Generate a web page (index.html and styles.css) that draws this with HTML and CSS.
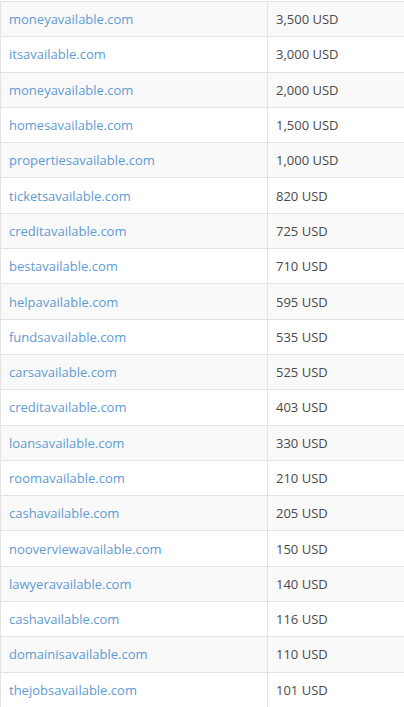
FILE: index.html
```html
<!DOCTYPE html>
<html lang="en">
<head>
    <meta charset="UTF-8">
    <meta name="viewport" content="width=device-width, initial-scale=1.0">
    <title>Available Domains</title>
    <link rel="stylesheet" href="styles.css">
</head>
<body>
    <table class="domains">
        <tbody>
            <tr><td><a href="#">moneyavailable.com</a></td><td>3,500 USD</td></tr>
            <tr><td><a href="#">itsavailable.com</a></td><td>3,000 USD</td></tr>
            <tr><td><a href="#">moneyavailable.com</a></td><td>2,000 USD</td></tr>
            <tr><td><a href="#">homesavailable.com</a></td><td>1,500 USD</td></tr>
            <tr><td><a href="#">propertiesavailable.com</a></td><td>1,000 USD</td></tr>
            <tr><td><a href="#">ticketsavailable.com</a></td><td>820 USD</td></tr>
            <tr><td><a href="#">creditavailable.com</a></td><td>725 USD</td></tr>
            <tr><td><a href="#">bestavailable.com</a></td><td>710 USD</td></tr>
            <tr><td><a href="#">helpavailable.com</a></td><td>595 USD</td></tr>
            <tr><td><a href="#">fundsavailable.com</a></td><td>535 USD</td></tr>
            <tr><td><a href="#">carsavailable.com</a></td><td>525 USD</td></tr>
            <tr><td><a href="#">creditavailable.com</a></td><td>403 USD</td></tr>
            <tr><td><a href="#">loansavailable.com</a></td><td>330 USD</td></tr>
            <tr><td><a href="#">roomavailable.com</a></td><td>210 USD</td></tr>
            <tr><td><a href="#">cashavailable.com</a></td><td>205 USD</td></tr>
            <tr><td><a href="#">nooverviewavailable.com</a></td><td>150 USD</td></tr>
            <tr><td><a href="#">lawyeravailable.com</a></td><td>140 USD</td></tr>
            <tr><td><a href="#">cashavailable.com</a></td><td>116 USD</td></tr>
            <tr><td><a href="#">domainisavailable.com</a></td><td>110 USD</td></tr>
            <tr><td><a href="#">thejobsavailable.com</a></td><td>101 USD</td></tr>
        </tbody>
    </table>
</body>
</html>
```

FILE: styles.css
```css
body {
    margin: 0;
    padding-top: 1px;
    background-color: #fff;
    font-family: 'Open Sans', 'Liberation Sans', sans-serif;
    font-size: 13px;
    color: #4a4a4a;
    overflow: hidden;
}

.domains {
    border-collapse: collapse;
    width: 100%;
    table-layout: fixed;
}

.domains td {
    height: 35.3px;
    box-sizing: border-box;
    padding: 0 8px;
    border: 1px solid #e3e3e3;
    vertical-align: middle;
}

.domains td:first-child {
    width: 267px;
}

.domains td:last-child {
    border-right: 0;
}

.domains tr:nth-child(odd) td {
    background-color: #f9f9f9;
}

.domains a {
    color: #5f9bd3;
    text-decoration: none;
}
```
